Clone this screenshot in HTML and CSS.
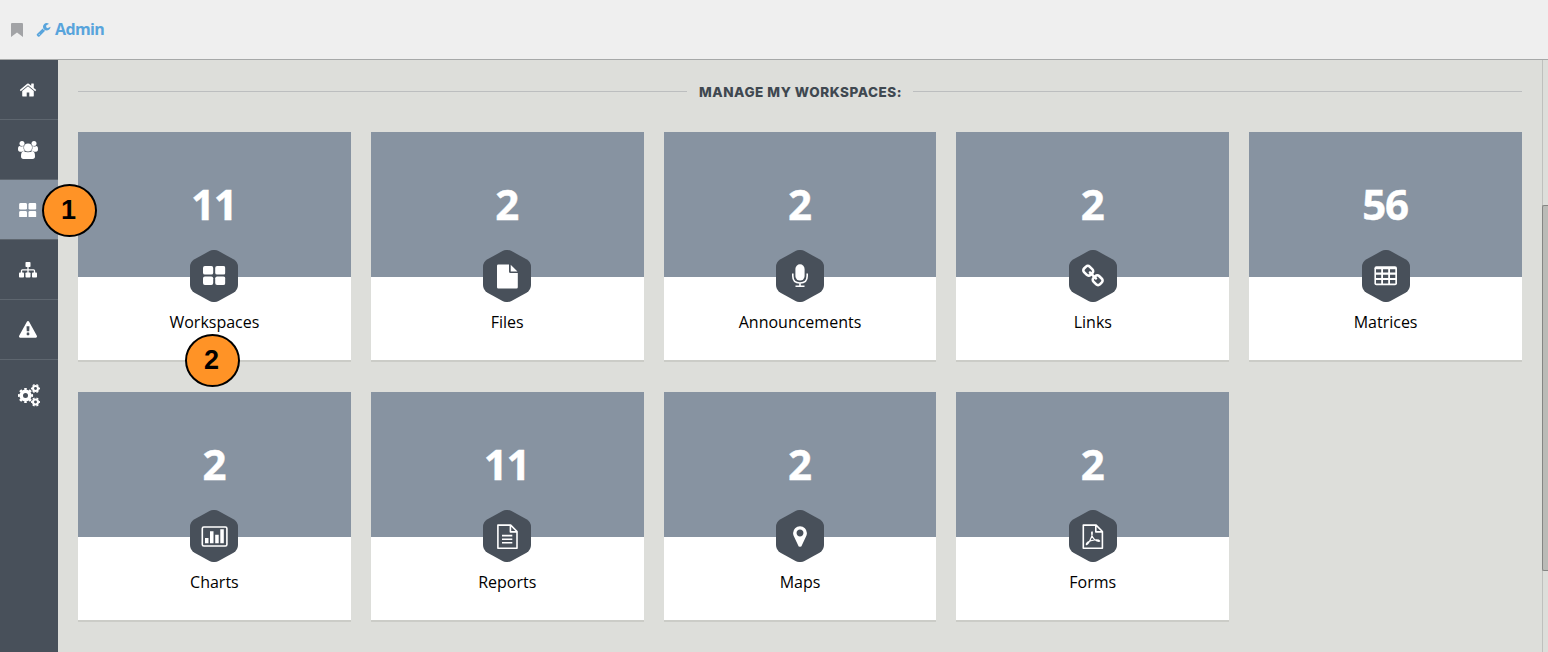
FILE: index.html
```html
<!DOCTYPE html>
<html lang="en">
<head>
<meta charset="utf-8">
<title>Admin</title>
<link rel="stylesheet" href="styles.css">
</head>
<body>
<svg class="defs" width="0" height="0">
  <symbol id="hex" viewBox="0 0 48 52"><path d="M19.500 1.100Q24-1.200 28.500 1.100L43.500 9.300Q48 12 48 17V35Q48 40 43.500 42.700L28.500 50.900Q24 53.200 19.500 50.900L4.500 42.700Q0 40 0 35V17Q0 12 4.500 9.300Z" fill="#48505a"/></symbol>
  <symbol id="grid" viewBox="0 0 22.400 19"><rect width="10.200" height="8.600" rx="1.900"/><rect x="12.200" width="10.200" height="8.600" rx="1.900"/><rect y="10.400" width="10.200" height="8.600" rx="1.900"/><rect x="12.200" y="10.400" width="10.200" height="8.600" rx="1.900"/></symbol>
</svg>
<header class="topbar">
  <svg class="bookmark" width="12" height="14" viewBox="0 0 12 14"><path d="M1 0h10q1 0 1 1v13L6 9.500 0 14V1Q0 0 1 0Z"/></svg>
  <a class="crumb"><svg width="15" height="15" viewBox="0 0 1792 1792"><path d="M448 1472q0-26-19-45t-45-19-45 19-19 45 19 45 45 19 45-19 19-45zm644-420l-682 682q-37 37-90 37-52 0-91-37l-106-108q-38-36-38-90 0-53 38-91l681-681q39 98 114.500 173.500t173.500 114.500zm634-435q0 39-23 106-47 134-164.500 217.500t-258.500 83.500q-185 0-316.500-131.500t-131.500-316.500 131.500-316.500 316.500-131.500q58 0 121.500 16.500t107.500 46.500q16 11 16 28t-16 28l-293 169v224l193 107q5-3 79-48.500t135.500-81 70.500-35.500q15 0 23.500 10t8.500 25z"/></svg><span>Admin</span></a>
</header>
<div class="body">
  <nav class="side">
    <a class="item"><svg width="18" height="18" viewBox="0 0 1792 1792"><path d="M1472 992v480q0 26-19 45t-45 19h-384v-384h-256v384h-384q-26 0-45-19t-19-45v-480q0-1 .5-3t.5-3l575-474 575 474q1 2 1 6zm223-69l-62 74q-8 9-21 11h-3q-13 0-21-7l-692-577-692 577q-12 8-24 7-13-2-21-11l-62-74q-8-10-7-23.500t11-21.500l719-599q32-26 76-26t76 26l244 204v-195q0-14 9-23t23-9h192q14 0 23 9t9 23v408l219 182q10 8 11 21.500t-7 23.500z"/></svg></a>
    <a class="item"><svg width="20" height="18" viewBox="0 0 20 18"><circle cx="4" cy="2.600" r="2.500"/><circle cx="16" cy="2.600" r="2.500"/><path d="M0 8Q0 4.900 1.800 4.900Q3.500 6 5.600 5.100Q5 8 6.800 9.800Q4.800 9.700 3.800 10.800H2Q0 10.800 0 8ZM20 8Q20 4.900 18.200 4.900Q16.500 6 14.400 5.100Q15 8 13.200 9.800Q15.200 9.700 16.200 10.800H18Q20 10.800 20 8Z"/><circle cx="10" cy="6.500" r="4"/><path d="M5.600 10Q7.500 11.300 10 11.300T14.400 10Q17 10.200 17 15.300Q17 18 14.500 18H5.500Q3 18 3 15.300Q3 10.200 5.600 10Z"/></svg></a>
    <a class="item active"><svg width="17.500" height="14.600"><use href="#grid"/></svg></a>
    <a class="item"><svg width="18" height="16" viewBox="0 0 18 16"><rect x="6.500" width="5" height="5" rx=".8"/><rect y="10.500" width="5" height="5" rx=".8"/><rect x="6.500" y="10.500" width="5" height="5" rx=".8"/><rect x="13" y="10.500" width="5" height="5" rx=".8"/><path d="M9 4V11M2.500 11V8.700Q2.500 7.800 3.400 7.800H14.600Q15.500 7.800 15.500 8.700V11" fill="none" stroke="#fff" stroke-width="1.300"/></svg></a>
    <a class="item"><svg width="18" height="18" viewBox="0 0 1792 1792"><path d="M1024 1375v-190q0-14-9.500-23.500t-22.500-9.500h-192q-13 0-22.500 9.500t-9.500 23.500v190q0 14 9.500 23.500t22.500 9.500h192q13 0 22.500-9.500t9.500-23.500zm-2-374l18-459q0-12-10-19-13-11-24-11h-220q-11 0-24 11-10 7-10 21l17 457q0 10 10 16.500t24 6.500h185q14 0 23.500-6.500t10.500-16.500zm-14-934l768 1408q35 63-2 126-17 29-46.500 46t-63.500 17h-1536q-34 0-63.500-17t-46.500-46q-37-63-2-126l768-1408q17-31 47-49t65-18 65 18 47 49z"/></svg></a>
    <a class="item last"><svg class="cogs" width="22" height="23" viewBox="0 0 22 23"><circle cx="7.500" cy="11.500" r="4.300" stroke-width="3.600"/><circle cx="7.500" cy="11.500" r="6.500" stroke-width="2.200" pathLength="16" stroke-dasharray="1 1" stroke-dashoffset=".5"/><circle cx="17.500" cy="4.500" r="2.500" stroke-width="2.100"/><circle cx="17.500" cy="4.500" r="3.900" stroke-width="1.300" pathLength="12" stroke-dasharray="1 1" stroke-dashoffset=".5"/><circle cx="17.500" cy="18" r="2.500" stroke-width="2.100"/><circle cx="17.500" cy="18" r="3.900" stroke-width="1.300" pathLength="12" stroke-dasharray="1 1" stroke-dashoffset=".5"/></svg></a>
  </nav>
  <main class="main">
    <h2 class="title"><span>MANAGE MY WORKSPACES:</span></h2>
    <div class="cards">
      <section class="card"><div class="count">11</div><svg class="icon" viewBox="0 0 48 52"><use href="#hex"/><use href="#grid" x="13" y="16" width="22.400" height="19"/></svg><div class="label">Workspaces</div></section>
      <section class="card"><div class="count">2</div><svg class="icon" viewBox="0 0 48 52"><use href="#hex"/><path d="M15.300 14.500H26V21.500Q26 23 27.500 23H34.800V37.300Q34.800 38.600 33.500 38.600H15.300Q14 38.600 14 37.300V15.800Q14 14.500 15.300 14.500ZM27.700 14.700L34.500 21.400H27.700Z"/></svg><div class="label">Files</div></section>
      <section class="card"><div class="count">2</div><svg class="icon" viewBox="0 0 48 52"><use href="#hex"/><rect x="19.400" y="14.300" width="9.200" height="16.200" rx="4.600"/><path d="M16.800 23.500V26Q16.800 33 24 33T31.200 26V23.500M24 33V36.300M19.500 36.300H28.500" class="line thick"/></svg><div class="label">Announcements</div></section>
      <section class="card"><div class="count">2</div><svg class="icon" viewBox="0 0 48 52"><use href="#hex"/><path transform="translate(12.800 14.300) scale(.0134)" d="M1456 1216q0-40-28-68l-208-208q-28-28-68-28-42 0-72 32 3 3 19 18.500t21.500 21.500 15 19 13 25.500 3.500 27.500q0 40-28 68t-68 28q-15 0-27.500-3.500t-25.500-13-19-15-21.500-21.500-18.500-19q-33 31-33 73 0 40 28 68l206 207q27 27 68 27 40 0 68-26l147-146q28-28 28-67zm-703-705q0-40-28-68l-206-207q-28-28-68-28-39 0-68 27l-147 146q-28 28-28 67 0 40 28 68l208 208q27 27 68 27 42 0 72-31-3-3-19-18.500t-21.500-21.500-15-19-13-25.500-3.500-27.500q0-40 28-68t68-28q15 0 27.500 3.500t25.500 13 19 15 21.500 21.500 18.500 19q33-31 33-73zm895 705q0 120-85 203l-147 146q-83 83-203 83-121 0-204-85l-206-207q-83-83-83-203 0-123 88-209l-88-88q-86 88-208 88-120 0-204-84l-208-208q-84-84-84-204t85-203l147-146q83-83 203-83 121 0 204 85l206 207q83 83 83 203 0 123-88 209l88 88q86-88 208-88 120 0 204 84l208 208q84 84 84 204z"/></svg><div class="label">Links</div></section>
      <section class="card"><div class="count">56</div><svg class="icon" viewBox="0 0 48 52"><use href="#hex"/><rect x="12.400" y="16.200" width="22.600" height="19" rx="2"/><path fill="#48505a" d="M14 19.300h5.200v3.200H14zM21 19.300h5.200v3.200H21zM28 19.300h5.300v3.200H28zM14 24.700h5.200v3.200H14zM21 24.700h5.200v3.200H21zM28 24.700h5.300v3.200H28zM14 30.100h5.200v3.300H14zM21 30.100h5.200v3.300H21zM28 30.100h5.300v3.300H28z"/></svg><div class="label">Matrices</div></section>
      <section class="card"><div class="count">2</div><svg class="icon" viewBox="0 0 48 52"><use href="#hex"/><rect x="12.300" y="17" width="24.600" height="19" rx="1.500" class="line thick"/><path d="M15 28h3.500v5.200H15zM20 21.200h3.500v12H20zM25.200 24.700h3.500v8.500h-3.500zM30.300 19.300h3.500v13.900h-3.500z"/></svg><div class="label">Charts</div></section>
      <section class="card"><div class="count">11</div><svg class="icon" viewBox="0 0 48 52"><use href="#hex"/><path d="M14.900 15.100H27.700L34 21.500V38.200H14.900ZM27.400 15.100V21.900H34M19 25.600H29.300M19 29.200H29.300M19 32.800H29.300" class="line thick"/></svg><div class="label">Reports</div></section>
      <section class="card"><div class="count">2</div><svg class="icon" viewBox="0 0 48 52"><use href="#hex"/><path transform="translate(11.900 14.400) scale(.0135)" d="M1152 640q0-106-75-181t-181-75-181 75-75 181 75 181 181 75 181-75 75-181zm256 0q0 109-33 179l-364 774q-16 33-47.500 52t-67.500 19-67.500-19-46.500-52l-365-774q-33-70-33-179 0-212 150-362t362-150 362 150 150 362z"/></svg><div class="label">Maps</div></section>
      <section class="card"><div class="count">2</div><svg class="icon" viewBox="0 0 48 52"><use href="#hex"/><path d="M14.300 15.100H27.100L33.400 21.500V38.200H14.300ZM26.800 15.100V21.900H33.400" class="line thick"/><path d="M23.300 22Q22.600 21.600 22.600 23Q22.600 28.500 28 31Q30.500 31.700 30.700 31Q30 29.500 25.500 30Q21.500 30.600 19 32Q16.800 33.800 17.400 34.700Q18.500 34.800 20.500 31.200Q23.700 25.500 23.300 22Z" class="line"/></svg><div class="label">Forms</div></section>
    </div>
  </main>
  <div class="scroll"><div class="thumb"></div></div>
</div>
<div class="badge one">1</div>
<div class="badge two">2</div>
</body>
</html>
```
FILE: styles.css
```css
* { box-sizing: border-box; }
body { margin: 0; height: 652px; overflow: hidden; position: relative; background: #dddeda; font-family: "Open Sans", sans-serif; color: #000; }
.defs { position: absolute; }
.topbar { height: 60px; background: #efefef; border-bottom: 1px solid #a6a8a8; display: flex; align-items: center; padding: 0 0 2px 11px; gap: 13px; }
.bookmark { fill: #a2a3a6; margin-top: 2px; }
.crumb { display: flex; align-items: center; gap: 4px; color: #58a4dc; font-size: 16px; font-weight: 700; letter-spacing: -.6px; }
.crumb svg { fill: #58a4dc; margin-top: 1px; }
.body { height: 592px; display: flex; }
.side { width: 58px; background: #48505a; fill: #fff; flex: none; }
.item { height: 60px; display: flex; align-items: center; justify-content: center; padding-right: 2px; border-bottom: 1px solid #5e666f; }
.item svg { display: block; margin-top: 1px; }
.item.active { background: #8793a1; }
.item.last { height: 70px; border: 0; padding-right: 0; }
.cogs { fill: none; stroke: #fff; }
.main { flex: 1; padding: 19px 20px 0; }
.title { margin: 0; height: 24px; display: flex; align-items: center; gap: 12px; font: 800 13.500px/24px Inter, sans-serif; letter-spacing: .54px; color: #3f4850; }
.title span { width: 202px; white-space: nowrap; padding-top: 1px; }
.title::before, .title::after { content: ""; flex: 1; height: 1px; background: #bcbebf; }
.cards { margin-top: 29px; display: grid; grid-template-columns: repeat(5, 1fr); gap: 30px 20px; }
.card { height: 230px; background: #fff; border-bottom: 2px solid #cbccc7; display: flex; flex-direction: column; align-items: center; }
.count { width: 100%; height: 145px; background: #8793a1; color: #fff; text-align: center; font-size: 42px; font-weight: 700; line-height: 144px; letter-spacing: -1.300px; text-indent: -1.300px; -webkit-text-stroke: .4px #fff; }
.icon { width: 48px; height: 52px; margin-top: -27px; position: relative; fill: #fff; flex: none; }
.line { fill: none; stroke: #fff; stroke-width: 1.100; stroke-linejoin: round; }
.thick { stroke-width: 1.600; }
.label { font-size: 16px; line-height: 22px; margin-top: 9px; }
.scroll { width: 6px; border-left: 1px solid #bfc0bd; padding-top: 145px; }
.thumb { margin-left: -1px; height: 366px; background: #babbb7; border: solid #858684; border-width: 1px 0 1px 1px; border-radius: 2px 0 0 2px; }
.badge { position: absolute; width: 55px; height: 53px; border: 2px solid #000; border-radius: 50%; background: #ff9326; font: 700 27px/48px "Liberation Sans", sans-serif; text-align: center; padding-right: 2px; }
.one { left: 42px; top: 184px; }
.two { left: 185px; top: 334px; }
```
